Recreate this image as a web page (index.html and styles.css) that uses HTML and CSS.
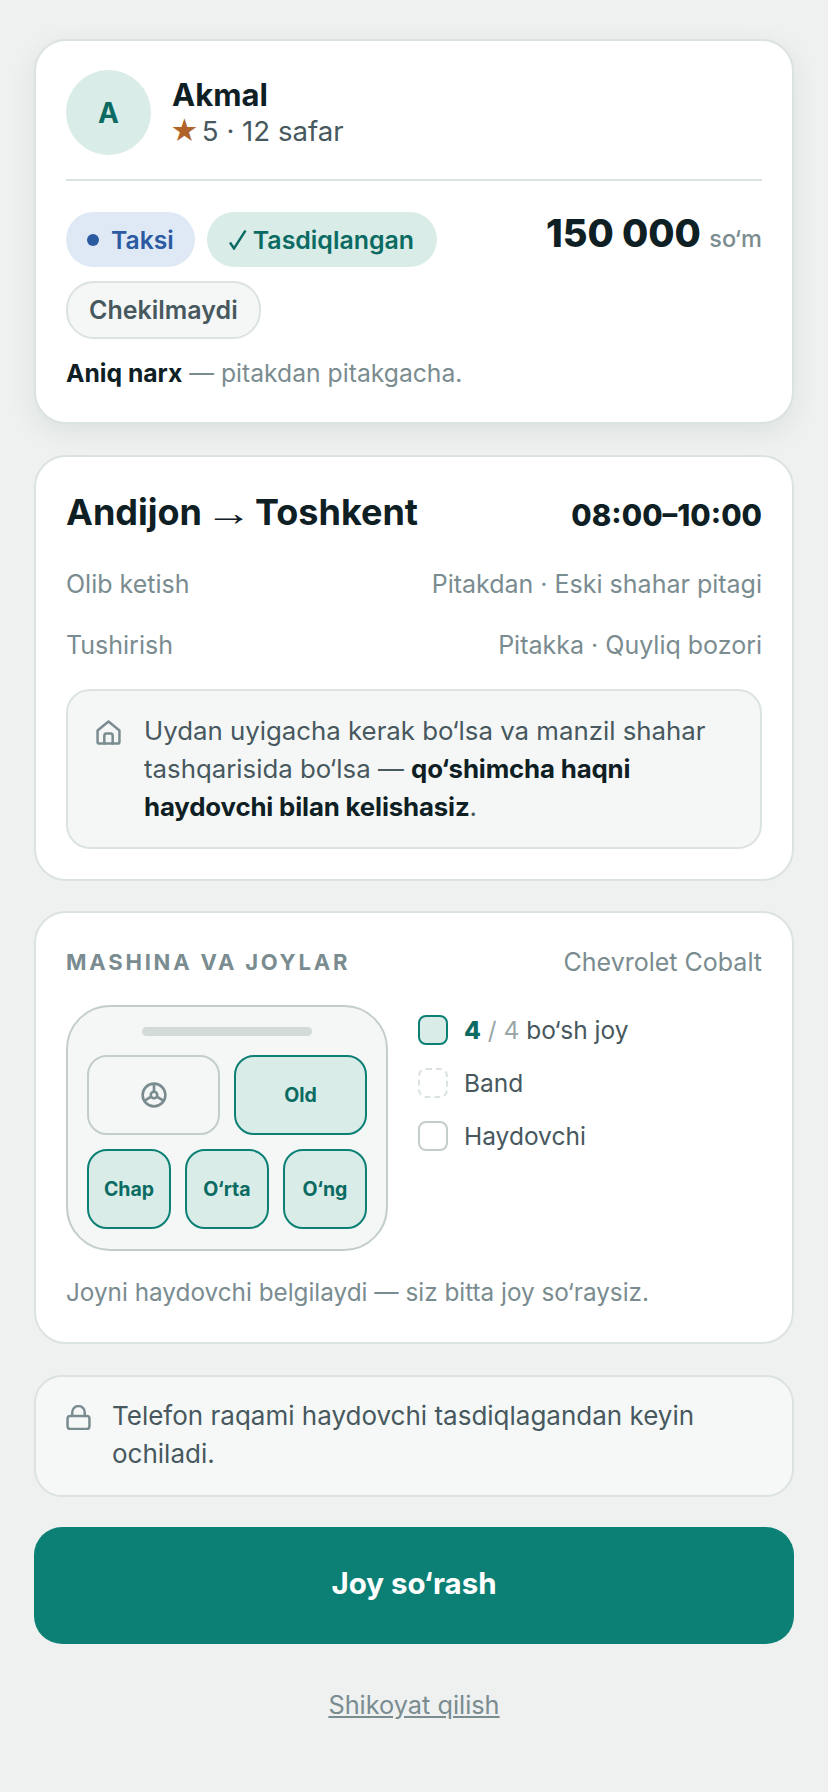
FILE: index.html
```html
<!DOCTYPE html>
<html lang="uz">
<head>
    <meta charset="UTF-8">
    <meta name="viewport" content="width=device-width, initial-scale=1.0">
    <title>Andijon → Toshkent</title>
    <link rel="stylesheet" href="styles.css">
</head>
<body>
    <main class="page">

        <!-- Driver and price -->
        <section class="card card-driver">
            <div class="driver">
                <div class="avatar">A</div>
                <div>
                    <div class="driver-name">Akmal</div>
                    <div class="driver-meta"><span class="star">★</span>5 · 12 safar</div>
                </div>
            </div>
            <div class="offer">
                <div class="chips">
                    <span class="chip chip-blue"><span class="dot"></span>Taksi</span>
                    <span class="chip chip-green">
                        <svg class="check" viewBox="0 0 18 20" fill="none" stroke="#0b6b62" stroke-width="2.4">
                            <path d="M1 12.5 5 18.5 16.5 0.5"/>
                        </svg>
                        Tasdiqlangan
                    </span>
                    <span class="chip chip-plain">Chekilmaydi</span>
                </div>
                <div class="price">150 000 <span class="currency">so‘m</span></div>
            </div>
            <p class="price-note"><b>Aniq narx</b> — pitakdan pitakgacha.</p>
        </section>

        <!-- Route -->
        <section class="card card-route">
            <div class="route-head">
                <h1>Andijon <span class="arrow">→</span> Toshkent</h1>
                <div class="route-time">08:00–10:00</div>
            </div>
            <div class="route-row"><span>Olib ketish</span><span>Pitakdan · Eski shahar pitagi</span></div>
            <div class="route-row"><span>Tushirish</span><span>Pitakka · Quyliq bozori</span></div>
            <div class="home-note">
                <svg class="icon" viewBox="0 0 24 24" fill="none" stroke="#7a8c90" stroke-width="2.4" stroke-linecap="round" stroke-linejoin="round">
                    <path d="M1.5 10 12 1.5 22.5 10V21a1.5 1.5 0 0 1-1.5 1.5H3A1.5 1.5 0 0 1 1.5 21z"/>
                    <path d="M8 22.5V15a2 2 0 0 1 2-2h4a2 2 0 0 1 2 2v7.5"/>
                </svg>
                <p>Uydan uyigacha kerak bo‘lsa va manzil shahar tashqarisida bo‘lsa — <b>qo‘shimcha haqni haydovchi bilan kelishasiz</b>.</p>
            </div>
        </section>

        <!-- Seats -->
        <section class="card card-seats">
            <div class="seats-head">
                <h2>MASHINA VA JOYLAR</h2>
                <span>Chevrolet Cobalt</span>
            </div>
            <div class="seats-body">
                <div class="car">
                    <div class="car-bar"></div>
                    <div class="seat-row">
                        <div class="seat seat-driver">
                            <svg class="wheel" viewBox="0 0 24 24" fill="none" stroke="#7a8c90" stroke-width="2.4">
                                <circle cx="12" cy="12" r="10.5"/>
                                <circle cx="12" cy="12" r="3"/>
                                <path d="M12 1.5V9M9.4 13.5 3 17.5M14.6 13.5 21 17.5"/>
                            </svg>
                        </div>
                        <div class="seat">Old</div>
                    </div>
                    <div class="seat-row seat-row-back">
                        <div class="seat">Chap</div>
                        <div class="seat">O‘rta</div>
                        <div class="seat">O‘ng</div>
                    </div>
                </div>
                <ul class="legend">
                    <li><span class="swatch swatch-free"></span><span><b>4</b> <em>/ 4</em> bo‘sh joy</span></li>
                    <li><span class="swatch swatch-taken"></span>Band</li>
                    <li><span class="swatch swatch-driver"></span>Haydovchi</li>
                </ul>
            </div>
            <p class="seats-note">Joyni haydovchi belgilaydi — siz bitta joy so‘raysiz.</p>
        </section>

        <div class="phone-note">
            <svg class="icon" viewBox="0 0 24 24" fill="none" stroke="#7a8c90" stroke-width="2.4" stroke-linecap="round" stroke-linejoin="round">
                <rect x="1.5" y="10.5" width="21" height="12.5" rx="2.5"/>
                <path d="M6 10.5V7a6 6 0 0 1 12 0v3.5"/>
            </svg>
            <p>Telefon raqami haydovchi tasdiqlagandan keyin ochiladi.</p>
        </div>

        <button type="button" class="request-btn">Joy so‘rash</button>
        <a class="report-link" href="#">Shikoyat qilish</a>
    </main>
</body>
</html>
```

FILE: styles.css
```css
* {
    box-sizing: border-box;
}

body {
    margin: 0;
    background-color: #eef1f0;
    color: #0f2024;
    font-family: Inter, "Liberation Sans", sans-serif;
    font-size: 25px;
}

p, h1, h2, ul {
    margin: 0;
    padding: 0;
}

.page {
    display: flex;
    flex-direction: column;
    padding: 39px 34px 0;
    min-height: 1792px;
}

.card {
    background: white;
    border: 2px solid #dbe3e1;
    border-radius: 32px;
    margin-bottom: 31px;
}

.card-driver {
    padding: 29px 30px 33px;
    box-shadow: 0 8px 28px rgba(15, 32, 36, 0.08);
}

/* Driver */
.driver {
    display: flex;
    align-items: center;
    gap: 21px;
    padding-bottom: 24px;
    border-bottom: 2px solid #dbe3e1;
}

.avatar {
    width: 85px;
    height: 85px;
    border-radius: 50%;
    background-color: #d9ece8;
    color: #0b6b62;
    display: flex;
    align-items: center;
    justify-content: center;
    font-size: 28px;
    font-weight: 700;
}

.driver-name {
    font-size: 31px;
    font-weight: 700;
    line-height: 36px;
}

.driver-meta {
    font-size: 27.6px;
    line-height: 36px;
    color: #47585e;
}

.star {
    margin: 0 3px 0 -2px;
    color: #b0642a;
}

/* Chips and price */
.offer {
    display: flex;
    justify-content: space-between;
    align-items: flex-start;
    margin-top: 31px;
}

.chips {
    display: flex;
    flex-wrap: wrap;
    gap: 14px 12px;
    width: 400px;
}

.chip {
    display: inline-flex;
    align-items: center;
    height: 55px;
    padding: 0 21px;
    border-radius: 28px;
    font-size: 24.7px;
    font-weight: 600;
}

.chip-blue {
    background-color: #dfe9f6;
    color: #2c5aa0;
}

.dot {
    width: 12px;
    height: 12px;
    margin-right: 12px;
    border-radius: 50%;
    background-color: #2c5aa0;
}

.chip-green {
    gap: 6px;
    padding: 0 23px 0 22px;
    background-color: #d9ece8;
    color: #0b6b62;
    font-size: 24.9px;
}

.check {
    width: 18px;
    height: 20px;
}

.chip-plain {
    height: 58px;
    background-color: #f5f7f6;
    border: 2px solid #dbe3e1;
    color: #47585e;
    font-size: 25px;
}

.price {
    font-size: 38px;
    font-weight: 800;
    line-height: 42px;
    white-space: nowrap;
}

.currency {
    font-size: 23.5px;
    font-weight: 500;
    color: #7a8c90;
}

.price-note {
    margin-top: 18px;
    font-size: 24.7px;
    line-height: 32px;
    color: #7a8c90;
}

.price-note b {
    color: #0f2024;
}

/* Route */
.card-route {
    padding: 31px 30px 30px;
    margin-bottom: 30px;
}

.route-head {
    display: flex;
    justify-content: space-between;
    align-items: center;
    margin-bottom: 30px;
}

h1 {
    font-size: 36px;
    font-weight: 700;
    line-height: 48px;
}

.arrow {
    display: inline-block;
    font-family: "Liberation Sans", sans-serif;
    font-weight: 700;
    transform: scaleX(1.3);
}

.route-time {
    font-size: 29.5px;
    font-weight: 800;
    padding-top: 4px;
}

.route-row {
    display: flex;
    justify-content: space-between;
    line-height: 34px;
    margin-bottom: 27px;
    color: #7a8c90;
}

.home-note {
    display: flex;
    gap: 23px;
    padding: 21px 27px 21px 28px;
    background-color: #f5f7f6;
    border: 2px solid #dbe3e1;
    border-radius: 24px;
    color: #47585e;
    font-size: 25.8px;
    line-height: 38px;
}

.home-note b {
    color: #0f2024;
    letter-spacing: -0.15px;
}

.icon {
    flex: none;
    width: 25px;
    height: 25px;
    margin-top: 8px;
}

/* Seats */
.card-seats {
    padding: 34px 30px 33px;
}

.seats-head {
    display: flex;
    justify-content: space-between;
    align-items: center;
    color: #7a8c90;
}

h2 {
    font-size: 22px;
    font-weight: 700;
    letter-spacing: 2.8px;
}

.seats-body {
    display: flex;
    gap: 30px;
    margin-top: 28px;
}

.car {
    width: 322px;
    height: 246px;
    padding: 20px 19px;
    background-color: #f5f7f6;
    border: 2px solid #c3ceca;
    border-radius: 44px;
}

.car-bar {
    width: 170px;
    height: 9px;
    margin: 0 auto 19px;
    border-radius: 5px;
    background-color: #d2dbd8;
}

.seat-row {
    display: grid;
    grid-template-columns: 1fr 1fr;
    gap: 14px;
    margin-bottom: 14px;
}

.seat-row-back {
    grid-template-columns: 1fr 1fr 1fr;
}

.seat {
    display: flex;
    align-items: center;
    justify-content: center;
    height: 80px;
    border: 2px solid #0d8076;
    border-radius: 20px;
    background-color: #d9ece8;
    color: #0b6b62;
    font-size: 19.5px;
    font-weight: 700;
}

.seat-driver {
    border-color: #c3ceca;
    background-color: #f5f7f6;
}

.wheel {
    width: 26px;
    height: 26px;
}

.legend {
    list-style: none;
    padding-top: 10px;
    color: #47585e;
    font-size: 24.5px;
}

.legend li {
    display: flex;
    align-items: center;
    gap: 16px;
    height: 30px;
    margin-bottom: 23px;
}

.legend b {
    color: #0b6b62;
    font-weight: 800;
}

.legend em {
    font-style: normal;
    color: #9aa6a8;
}

.swatch {
    width: 30px;
    height: 30px;
    border-radius: 8px;
}

.swatch-free {
    background-color: #d9ece8;
    border: 2px solid #0d8076;
}

.swatch-taken {
    border: 2px dashed #dbe3e1;
}

.swatch-driver {
    border: 2px solid #c3ceca;
}

.seats-note {
    margin-top: 24px;
    font-size: 24.3px;
    line-height: 34px;
    color: #7a8c90;
}

/* Bottom */
.phone-note {
    display: flex;
    gap: 21px;
    padding: 20px 30px 22px;
    background-color: #f6f8f7;
    border: 2px solid #dbe3e1;
    border-radius: 28px;
    color: #47585e;
    font-size: 26px;
    line-height: 38px;
}

.request-btn {
    height: 117px;
    margin-top: 30px;
    padding-bottom: 6px;
    border: none;
    border-radius: 28px;
    background-color: #0d8076;
    color: white;
    font-family: inherit;
    font-size: 29.5px;
    font-weight: 700;
}

.report-link {
    margin-top: 44px;
    text-align: center;
    color: #7a8c90;
    font-size: 25.3px;
    line-height: 34px;
}
```
